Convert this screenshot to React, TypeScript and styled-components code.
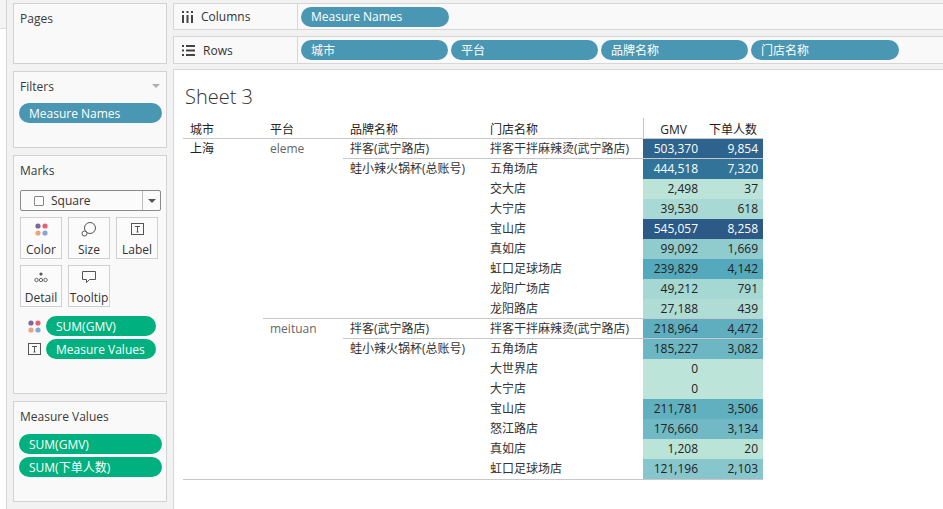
import React from "react";
import styled, { createGlobalStyle } from "styled-components";

const Global = createGlobalStyle`
  html, body { margin: 0; padding: 0; }
  body {
    background: #f2f2f2;
    font-family: "Open Sans", "Noto Sans CJK SC", sans-serif;
    font-size: 12px;
    color: #333;
    overflow: hidden;
  }
`;

const Page = styled.div`
  display: flex;
  width: 943px;
  height: 509px;
  overflow: hidden;
`;

const Strip = styled.div`
  width: 6px;
  border-right: 1px solid #d6d6d6;
  display: flex;
  flex-direction: column;
  margin-right: 6px;
`;
const StripTop = styled.div`
  height: 28px;
  background: #f4f4f4;
  border-bottom: 1px solid #dcdcdc;
`;
const StripBody = styled.div`
  flex: 1;
  background: #fff;
`;

const Sidebar = styled.div`
  width: 154px;
  display: flex;
  flex-direction: column;
  gap: 7px;
  padding-top: 3px;
  margin-right: 6px;
`;

const Card = styled.div<{ $h: number }>`
  box-sizing: border-box;
  height: ${(p) => p.$h}px;
  background: #f9f9f9;
  border: 1px solid #d2d2d2;
  padding: 4px 4px 0 5px;
  display: flex;
  flex-direction: column;
`;

const CardTitle = styled.div`
  display: flex;
  align-items: center;
  justify-content: space-between;
  height: 20px;
  padding-left: 1px;
  color: #3a3a3a;
  font-size: 12px;
`;

const Caret = styled.span<{ $dark?: boolean }>`
  width: 0;
  height: 0;
  border-left: 4px solid transparent;
  border-right: 4px solid transparent;
  border-top: 4px solid ${(p) => (p.$dark ? "#555" : "#b0b0b0")};
  margin-right: ${(p) => (p.$dark ? 0 : 2)}px;
`;

const Pill = styled.div<{ $color: string; $w?: number }>`
  box-sizing: border-box;
  height: 20px;
  width: ${(p) => (p.$w ? `${p.$w}px` : "100%")};
  border-radius: 10px;
  background: ${(p) => p.$color};
  color: #fff;
  display: flex;
  align-items: center;
  padding-left: 10px;
  font-size: 12px;
  white-space: nowrap;
  flex-shrink: 0;
`;

const PillStack = styled.div<{ $mt: number }>`
  display: flex;
  flex-direction: column;
  gap: 3px;
  margin-top: ${(p) => p.$mt}px;
`;

const MarkSelect = styled.div`
  box-sizing: border-box;
  margin: 10px 1px 0 1px;
  height: 21px;
  border: 1px solid #8a8a8a;
  border-radius: 2px;
  display: flex;
  align-items: center;
  background: #fbfbfb;
`;
const SelectLabel = styled.div`
  flex: 1;
  display: flex;
  align-items: center;
  gap: 7px;
  padding-left: 13px;
  color: #333;
`;
const CheckBox = styled.span`
  width: 8px;
  height: 8px;
  border: 1px solid #888;
  border-radius: 1px;
`;
const SelectArrow = styled.div`
  width: 17px;
  height: 100%;
  border-left: 1px solid #bdbdbd;
  display: flex;
  align-items: center;
  justify-content: center;
`;

const MarkGrid = styled.div`
  display: grid;
  grid-template-columns: repeat(3, 42px);
  grid-auto-rows: 42px;
  column-gap: 6px;
  row-gap: 6px;
  margin: 6px 0 0 1px;
`;

const MarkBtn = styled.div`
  box-sizing: border-box;
  border: 1px solid #d0d0d0;
  background: #fbfbfb;
  display: flex;
  flex-direction: column;
  align-items: center;
  justify-content: flex-start;
  padding-top: 3px;
  gap: 5px;
  font-size: 12px;
  line-height: 16px;
  color: #333;
`;
const MarkIcon = styled.div`
  height: 16px;
  display: flex;
  align-items: center;
  justify-content: center;
`;

const EncRows = styled.div`
  display: flex;
  flex-direction: column;
  gap: 3px;
  margin-top: 9px;
`;
const EncRow = styled.div`
  display: flex;
  align-items: center;
  gap: 5px;
  padding-left: 8px;
`;
const EncIcon = styled.div`
  width: 14px;
  display: flex;
  justify-content: center;
`;

const Main = styled.div`
  flex: 1;
  display: flex;
  flex-direction: column;
  padding-top: 3px;
`;

const Shelf = styled.div<{ $h: number; $mb: number }>`
  box-sizing: border-box;
  height: ${(p) => p.$h}px;
  margin-bottom: ${(p) => p.$mb}px;
  background: #f9f9f9;
  border: 1px solid #d6d6d6;
  border-right: none;
  display: flex;
  align-items: center;
`;
const ShelfLabel = styled.div`
  width: 124px;
  height: 100%;
  box-sizing: border-box;
  border-right: 1px solid #d6d6d6;
  display: flex;
  align-items: center;
  gap: 8px;
  padding-left: 8px;
  color: #333;
  font-size: 12px;
  margin-right: 3px;
`;
const ShelfPills = styled.div`
  display: flex;
  gap: 3px;
`;

const Sheet = styled.div`
  flex: 1;
  background: #fff;
  border-top: 1px solid #d6d6d6;
  border-left: 1px solid #d6d6d6;
  padding: 14px 0 0 9px;
`;
const Title = styled.div`
  font-family: "Open Sans", sans-serif;
  font-weight: 300;
  font-size: 20px;
  color: #333;
  line-height: 26px;
  padding-left: 2px;
  margin-bottom: 8px;
`;

const Table = styled.div`
  width: 580px;
  border-bottom: 1px solid #c8c8c8;
`;
const HeaderRow = styled.div`
  display: flex;
  height: 21px;
  border-bottom: 1px solid #c8c8c8;
  box-sizing: border-box;
`;
const HeadCell = styled.div<{ $w: number; $center?: boolean; $line?: boolean }>`
  width: ${(p) => p.$w}px;
  box-sizing: border-box;
  display: flex;
  align-items: center;
  justify-content: ${(p) => (p.$center ? "center" : "flex-start")};
  padding-left: ${(p) => (p.$center ? 0 : 7)}px;
  padding-top: 2px;
  border-left: ${(p) => (p.$line ? "1px solid #c8c8c8" : "none")};
  color: #222;
  font-size: 12px;
`;

const Flex = styled.div`
  display: flex;
`;
const Col = styled.div`
  display: flex;
  flex-direction: column;
`;
const Block = styled.div<{ $sep: boolean }>`
  display: flex;
  border-top: ${(p) => (p.$sep ? "1px solid #c8c8c8" : "none")};
  margin-top: ${(p) => (p.$sep ? -1 : 0)}px;
  position: relative;
`;
const DimCell = styled.div<{ $w: number; $muted?: boolean; $strong?: boolean }>`
  width: ${(p) => p.$w}px;
  box-sizing: border-box;
  padding-left: 7px;
  height: 20px;
  line-height: 20px;
  color: ${(p) => (p.$muted ? "#666" : p.$strong ? "#1e1e1e" : "#333")};
  white-space: nowrap;
  flex-shrink: 0;
`;
const ValRow = styled.div`
  display: flex;
  height: 20px;
`;
const Val = styled.div<{ $bg: string; $fg: string }>`
  width: 60px;
  box-sizing: border-box;
  padding-right: 5px;
  text-align: right;
  line-height: 20px;
  background: ${(p) => p.$bg};
  color: ${(p) => p.$fg};
`;

const PALETTE = [
  "#bce4d8", "#aedcd5", "#a1d5d2", "#95cecf", "#89c8cc", "#7ec1ca", "#72bac6",
  "#66b2c2", "#59acbe", "#4ba5ba", "#419eb6", "#3b96b2", "#358ead", "#3586a7",
  "#347ea1", "#32779b", "#316f96", "#2f6790", "#2d608a", "#2c5985",
];
const hex = (h: string) => [1, 3, 5].map((i) => parseInt(h.slice(i, i + 2), 16));
function colorFor(v: number) {
  const t = Math.max(0, Math.min(1, v / 545057));
  const x = t * (PALETTE.length - 1);
  const i = Math.min(PALETTE.length - 2, Math.floor(x));
  const f = x - i;
  const a = hex(PALETTE[i]);
  const b = hex(PALETTE[i + 1]);
  const c = a.map((n, k) => Math.round(n + (b[k] - n) * f));
  return { bg: `rgb(${c.join(",")})`, fg: t > 0.6 ? "#fff" : "#222" };
}
const fmt = (n: number | null) => (n === null ? "" : n.toLocaleString("en-US"));

type Store = [string, number, number | null];
type Brand = { name: string; stores: Store[] };
type Platform = { name: string; brands: Brand[] };

const DATA: Platform[] = [
  {
    name: "eleme",
    brands: [
      { name: "拌客(武宁路店)", stores: [["拌客干拌麻辣烫(武宁路店)", 503370, 9854]] },
      {
        name: "蛙小辣火锅杯(总账号)",
        stores: [
          ["五角场店", 444518, 7320],
          ["交大店", 2498, 37],
          ["大宁店", 39530, 618],
          ["宝山店", 545057, 8258],
          ["真如店", 99092, 1669],
          ["虹口足球场店", 239829, 4142],
          ["龙阳广场店", 49212, 791],
          ["龙阳路店", 27188, 439],
        ],
      },
    ],
  },
  {
    name: "meituan",
    brands: [
      { name: "拌客(武宁路店)", stores: [["拌客干拌麻辣烫(武宁路店)", 218964, 4472]] },
      {
        name: "蛙小辣火锅杯(总账号)",
        stores: [
          ["五角场店", 185227, 3082],
          ["大世界店", 0, null],
          ["大宁店", 0, null],
          ["宝山店", 211781, 3506],
          ["怒江路店", 176660, 3134],
          ["真如店", 1208, 20],
          ["虹口足球场店", 121196, 2103],
        ],
      },
    ],
  },
];

const BLUE = "#4a97b3";
const GREEN = "#00b07e";

const ColorDots = () => (
  <svg width="13" height="13" viewBox="0 0 13 13">
    <circle cx="3" cy="3" r="2.6" fill="#7a6a9a" />
    <circle cx="10" cy="3" r="2.6" fill="#e8606f" />
    <circle cx="3" cy="10" r="2.6" fill="#f2a07d" />
    <circle cx="10" cy="10" r="2.6" fill="#86a7d4" />
  </svg>
);
const LabelIcon = () => (
  <svg width="13" height="12" viewBox="0 0 13 12">
    <rect x="0.5" y="0.5" width="12" height="11" fill="none" stroke="#555" />
    <path d="M4 3.5h5M6.5 3.5v5.5M5.5 9h2" stroke="#555" fill="none" />
  </svg>
);

const SheetTable = () => (
  <Table>
    <HeaderRow>
      <HeadCell $w={80}>城市</HeadCell>
      <HeadCell $w={80}>平台</HeadCell>
      <HeadCell $w={140}>品牌名称</HeadCell>
      <HeadCell $w={160}>门店名称</HeadCell>
      <HeadCell $w={60} $center $line>GMV</HeadCell>
      <HeadCell $w={60} $center>下单人数</HeadCell>
    </HeaderRow>
    <Flex>
      <DimCell $w={80} $strong>上海</DimCell>
      <Col>
        {DATA.map((p, pi) => (
          <Block key={p.name} $sep={pi > 0}>
            <DimCell $w={80} $muted>{p.name}</DimCell>
            <Col>
              {p.brands.map((b, bi) => (
                <Block key={b.name} $sep={bi > 0}>
                  <DimCell $w={140}>{b.name}</DimCell>
                  <Col>
                    {b.stores.map(([s, g, o]) => {
                      const c = colorFor(g);
                      return (
                        <ValRow key={s}>
                          <DimCell $w={160}>{s}</DimCell>
                          <Val $bg={c.bg} $fg={c.fg}>{fmt(g)}</Val>
                          <Val $bg={c.bg} $fg={c.fg}>{fmt(o)}</Val>
                        </ValRow>
                      );
                    })}
                  </Col>
                </Block>
              ))}
            </Col>
          </Block>
        ))}
      </Col>
    </Flex>
  </Table>
);

export default function App() {
  return (
    <Page>
      <Global />
      <Strip>
        <StripTop />
        <StripBody />
      </Strip>
      <Sidebar>
        <Card $h={61}>
          <CardTitle>Pages</CardTitle>
        </Card>
        <Card $h={77}>
          <CardTitle>
            Filters <Caret />
          </CardTitle>
          <PillStack $mt={7}>
            <Pill $color={BLUE}>Measure Names</Pill>
          </PillStack>
        </Card>
        <Card $h={239}>
          <CardTitle>Marks</CardTitle>
          <MarkSelect>
            <SelectLabel>
              <CheckBox />
              Square
            </SelectLabel>
            <SelectArrow>
              <Caret $dark />
            </SelectArrow>
          </MarkSelect>
          <MarkGrid>
            <MarkBtn>
              <MarkIcon>
                <ColorDots />
              </MarkIcon>
              Color
            </MarkBtn>
            <MarkBtn>
              <MarkIcon>
                <svg width="16" height="16" viewBox="0 0 16 16">
                  <circle cx="9" cy="7" r="5.5" fill="none" stroke="#555" />
                  <circle cx="3.5" cy="12.5" r="2.5" fill="#fbfbfb" stroke="#555" />
                </svg>
              </MarkIcon>
              Size
            </MarkBtn>
            <MarkBtn>
              <MarkIcon>
                <LabelIcon />
              </MarkIcon>
              Label
            </MarkBtn>
            <MarkBtn>
              <MarkIcon>
                <svg width="16" height="12" viewBox="0 0 16 12">
                  <circle cx="8" cy="3" r="1.6" fill="#555" />
                  <circle cx="3.5" cy="9" r="1.7" fill="none" stroke="#555" strokeWidth="0.9" />
                  <circle cx="8" cy="9" r="1.7" fill="none" stroke="#555" strokeWidth="0.9" />
                  <circle cx="12.5" cy="9" r="1.7" fill="none" stroke="#555" strokeWidth="0.9" />
                </svg>
              </MarkIcon>
              Detail
            </MarkBtn>
            <MarkBtn>
              <MarkIcon>
                <svg width="16" height="14" viewBox="0 0 16 14">
                  <path d="M1.5 1.5h13v8h-6l-3 3v-3h-4z" fill="none" stroke="#555" strokeLinejoin="round" />
                </svg>
              </MarkIcon>
              Tooltip
            </MarkBtn>
          </MarkGrid>
          <EncRows>
            <EncRow>
              <EncIcon>
                <ColorDots />
              </EncIcon>
              <Pill $color={GREEN} $w={110}>SUM(GMV)</Pill>
            </EncRow>
            <EncRow>
              <EncIcon>
                <LabelIcon />
              </EncIcon>
              <Pill $color={GREEN} $w={110}>Measure Values</Pill>
            </EncRow>
          </EncRows>
        </Card>
        <Card $h={101}>
          <CardTitle>Measure Values</CardTitle>
          <PillStack $mt={8}>
            <Pill $color={GREEN}>SUM(GMV)</Pill>
            <Pill $color={GREEN}>SUM(下单人数)</Pill>
          </PillStack>
        </Card>
      </Sidebar>
      <Main>
        <Shelf $h={27} $mb={6}>
          <ShelfLabel>
            <svg width="11" height="12" viewBox="0 0 11 12">
              <rect x="0" y="0" width="2" height="2" fill="#444" />
              <rect x="4.5" y="0" width="2" height="2" fill="#444" />
              <rect x="9" y="0" width="2" height="2" fill="#444" />
              <rect x="0" y="4" width="2" height="8" fill="#444" />
              <rect x="4.5" y="4" width="2" height="8" fill="#444" />
              <rect x="9" y="4" width="2" height="8" fill="#444" />
            </svg>
            Columns
          </ShelfLabel>
          <ShelfPills>
            <Pill $color={BLUE} $w={148}>Measure Names</Pill>
          </ShelfPills>
        </Shelf>
        <Shelf $h={28} $mb={5}>
          <ShelfLabel>
            <svg width="13" height="11" viewBox="0 0 13 11">
              <rect x="0" y="0" width="2" height="2" fill="#444" />
              <rect x="0" y="4.5" width="2" height="2" fill="#444" />
              <rect x="0" y="9" width="2" height="2" fill="#444" />
              <rect x="4" y="0" width="9" height="2" fill="#444" />
              <rect x="4" y="4.5" width="9" height="2" fill="#444" />
              <rect x="4" y="9" width="9" height="2" fill="#444" />
            </svg>
            Rows
          </ShelfLabel>
          <ShelfPills>
            <Pill $color={BLUE} $w={147}>城市</Pill>
            <Pill $color={BLUE} $w={147}>平台</Pill>
            <Pill $color={BLUE} $w={147}>品牌名称</Pill>
            <Pill $color={BLUE} $w={148}>门店名称</Pill>
          </ShelfPills>
        </Shelf>
        <Sheet>
          <Title>Sheet 3</Title>
          <SheetTable />
        </Sheet>
      </Main>
    </Page>
  );
}
